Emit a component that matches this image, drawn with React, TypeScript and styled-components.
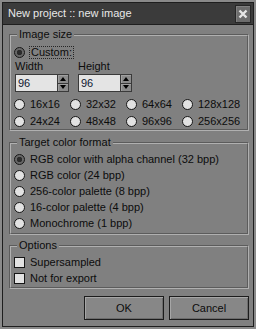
import React from 'react';
import styled, { createGlobalStyle } from 'styled-components';

const Global = createGlobalStyle`
    html, body {
        margin: 0;
        padding: 0;
        background: #8a8a8a;
    }
    * {
        box-sizing: border-box;
    }
`;

const Frame = styled.div`
    width: 256px;
    height: 329px;
    padding: 2px;
    background: #8a8a8a;
    font-family: "Liberation Sans", Arial, sans-serif;
    font-size: 11px;
    line-height: 13px;
    color: #0c0c0c;
`;

const Window = styled.div`
    height: 100%;
    display: flex;
    flex-direction: column;
    border: 1px solid #1e1e1e;
`;

const TitleBar = styled.div`
    height: 22px;
    flex: none;
    display: flex;
    align-items: center;
    justify-content: space-between;
    padding: 0 2px 0 5px;
    background: #3b3b3b;
    border-bottom: 1px solid #1e1e1e;
    color: #e8e8e8;
`;

const CloseButton = styled.div`
    width: 16px;
    height: 18px;
    display: flex;
    align-items: center;
    justify-content: center;
    background: #6c6c6c;
    border: 1px solid #262626;
    box-shadow: inset 1px 1px #808080;
`;

const Body = styled.div`
    flex: 1;
    display: flex;
    flex-direction: column;
    padding: 0 4px 4px 6px;
    background: #808080;
`;

const Group = styled.fieldset<{ $top: number; $pb: number; $pt: number }>`
    margin: ${({ $top }) => $top}px 0 0 0;
    padding: ${({ $pt }) => $pt}px 4px ${({ $pb }) => $pb}px 3px;
    border: 2px groove #b0b0b0;
    min-width: 0;
`;

const Legend = styled.legend`
    margin-left: 3px;
    padding: 0 2px;
    line-height: 13px;
`;

const Row = styled.label<{ $h: number }>`
    height: ${({ $h }) => $h}px;
    display: flex;
    align-items: center;
    gap: 5px;
    white-space: nowrap;
`;

const Radio = styled.span<{ $on?: boolean }>`
    width: 11px;
    height: 11px;
    flex: none;
    border-radius: 50%;
    border: 1px solid #161616;
    background: ${({ $on }) =>
        $on ? 'radial-gradient(circle, #2c2c2c 0 2.5px, #686868 3px)' : '#e2e2e2'};
`;

const Check = styled.span`
    width: 11px;
    height: 11px;
    flex: none;
    border: 1px solid #161616;
    background: #e2e2e2;
`;

const Focus = styled.span`
    padding: 0 1px;
    margin-left: -1px;
    border: 1px dotted #262626;
    line-height: 11px;
`;

const Fields = styled.div`
    display: flex;
    gap: 9px;
    padding-left: 1px;
    margin-bottom: 5px;
`;

const Field = styled.div`
    display: flex;
    flex-direction: column;
    gap: 1px;
`;

const Spin = styled.div`
    display: flex;
    height: 18px;
`;

const NumInput = styled.div`
    width: 42px;
    height: 18px;
    padding: 2px 0 0 2px;
    background: #e4e4e4;
    border: 1px solid #3a3a3a;
    border-right: none;
    color: #0e1630;
`;

const Arrows = styled.div`
    width: 12px;
    display: flex;
    flex-direction: column;
    border: 1px solid #3a3a3a;
    background: #8a8a8a;
`;

const Arrow = styled.div<{ $down?: boolean }>`
    flex: 1;
    display: flex;
    align-items: center;
    justify-content: center;
    border-top: ${({ $down }) => ($down ? '1px solid #3a3a3a' : 'none')};
    box-shadow: inset 1px 1px #a0a0a0;
    &::after {
        content: '';
        border-left: 3.5px solid transparent;
        border-right: 3.5px solid transparent;
        ${({ $down }) => ($down ? 'border-top: 4px solid #000;' : 'border-bottom: 4px solid #000;')}
    }
`;

const SizeGrid = styled.div`
    display: grid;
    grid-template-columns: repeat(4, 56px);
    row-gap: 3px;
`;

const Buttons = styled.div`
    display: flex;
    justify-content: flex-end;
    gap: 5px;
    margin-top: 7px;
`;

const Button = styled.div`
    width: 80px;
    height: 24px;
    display: flex;
    align-items: center;
    justify-content: center;
    background: #878787;
    border: 1px solid #1c1c1c;
    box-shadow: inset 1px 1px #a6a6a6, inset -1px -1px #6c6c6c;
`;

const sizes = ['16x16', '32x32', '64x64', '128x128', '24x24', '48x48', '96x96', '256x256'];
const formats = [
    'RGB color with alpha channel (32 bpp)',
    'RGB color (24 bpp)',
    '256-color palette (8 bpp)',
    '16-color palette (4 bpp)',
    'Monochrome (1 bpp)',
];

const SpinBox = ({ value }: { value: string }) => (
    <Spin>
        <NumInput>{value}</NumInput>
        <Arrows>
            <Arrow />
            <Arrow $down />
        </Arrows>
    </Spin>
);

const App = () => {
    return (
        <Frame>
            <Global />
            <Window>
                <TitleBar>
                    <span>New project :: new image</span>
                    <CloseButton>
                        <svg width="10" height="10" viewBox="0 0 10 10">
                            <path d="M1.5 1.5L8.5 8.5M8.5 1.5L1.5 8.5" stroke="#e6e6e6" strokeWidth="2.4" />
                        </svg>
                    </CloseButton>
                </TitleBar>
                <Body>
                    <Group $top={3} $pt={3} $pb={1}>
                        <Legend>Image size</Legend>
                        <Row $h={16}>
                            <Radio $on />
                            <Focus>Custom:</Focus>
                        </Row>
                        <Fields>
                            <Field>
                                <span>Width</span>
                                <SpinBox value="96" />
                            </Field>
                            <Field>
                                <span>Height</span>
                                <SpinBox value="96" />
                            </Field>
                        </Fields>
                        <SizeGrid>
                            {sizes.map((s) => (
                                <Row $h={14} key={s}>
                                    <Radio />
                                    {s}
                                </Row>
                            ))}
                        </SizeGrid>
                    </Group>
                    <Group $top={5} $pt={2} $pb={2}>
                        <Legend>Target color format</Legend>
                        {formats.map((f, i) => (
                            <Row $h={16} key={f}>
                                <Radio $on={i === 0} />
                                {f}
                            </Row>
                        ))}
                    </Group>
                    <Group $top={4} $pt={2} $pb={1}>
                        <Legend>Options</Legend>
                        <Row $h={16}>
                            <Check />
                            Supersampled
                        </Row>
                        <Row $h={16}>
                            <Check />
                            Not for export
                        </Row>
                    </Group>
                    <Buttons>
                        <Button>OK</Button>
                        <Button>Cancel</Button>
                    </Buttons>
                </Body>
            </Window>
        </Frame>
    );
};

export default App;
